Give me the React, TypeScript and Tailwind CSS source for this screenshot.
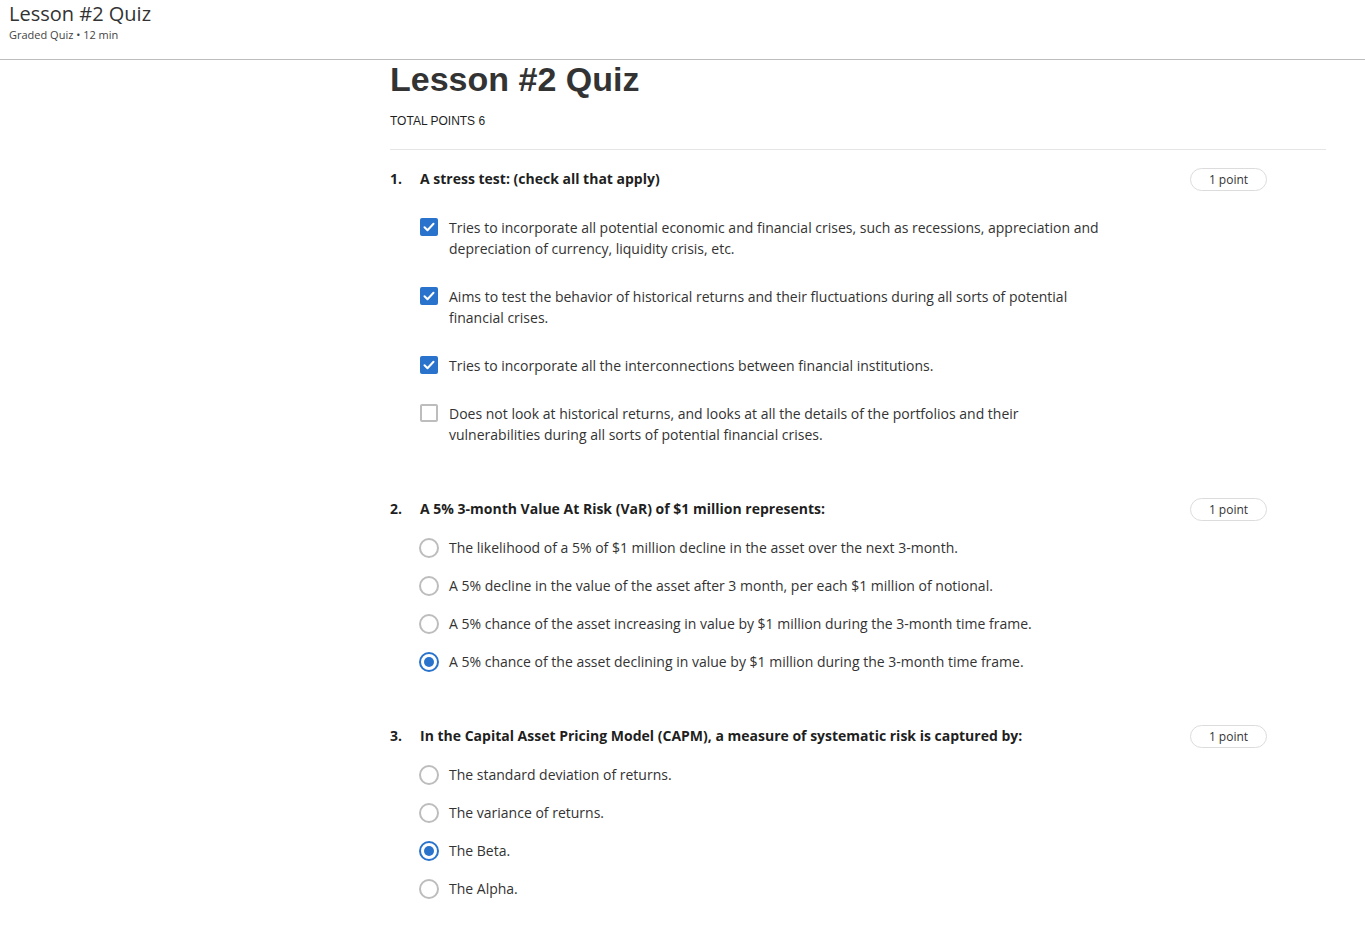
import React from "react";

type Question = {
  n: number;
  title: string;
  kind: "check" | "radio";
  options: { text: string; on: boolean }[];
};

const questions: Question[] = [
  {
    n: 1,
    title: "A stress test: (check all that apply)",
    kind: "check",
    options: [
      {
        text: "Tries to incorporate all potential economic and financial crises, such as recessions, appreciation and depreciation of currency, liquidity crisis, etc.",
        on: true,
      },
      {
        text: "Aims to test the behavior of historical returns and their fluctuations during all sorts of potential financial crises.",
        on: true,
      },
      { text: "Tries to incorporate all the interconnections between financial institutions.", on: true },
      {
        text: "Does not look at historical returns, and looks at all the details of the portfolios and their vulnerabilities during all sorts of potential financial crises.",
        on: false,
      },
    ],
  },
  {
    n: 2,
    title: "A 5% 3-month Value At Risk (VaR) of $1 million represents:",
    kind: "radio",
    options: [
      { text: "The likelihood of a 5% of $1 million decline in the asset over the next 3-month.", on: false },
      { text: "A 5% decline in the value of the asset after 3 month, per each $1 million of notional.", on: false },
      { text: "A 5% chance of the asset increasing in value by $1 million during the 3-month time frame.", on: false },
      { text: "A 5% chance of the asset declining in value by $1 million during the 3-month time frame.", on: true },
    ],
  },
  {
    n: 3,
    title: "In the Capital Asset Pricing Model (CAPM), a measure of systematic risk is captured by:",
    kind: "radio",
    options: [
      { text: "The standard deviation of returns.", on: false },
      { text: "The variance of returns.", on: false },
      { text: "The Beta.", on: true },
      { text: "The Alpha.", on: false },
    ],
  },
];

function Checkbox({ on }: { on: boolean }) {
  if (on) {
    return (
      <span className="mt-[1px] flex h-[18px] w-[18px] shrink-0 items-center justify-center rounded-[2px] bg-[#2a73cc]">
        <svg width="14" height="14" viewBox="0 0 14 14" fill="none">
          <path d="M2.5 7.2l3 3 6-6.4" stroke="#fff" strokeWidth="2" strokeLinecap="round" strokeLinejoin="round" />
        </svg>
      </span>
    );
  }
  return <span className="mt-[1px] h-[18px] w-[18px] shrink-0 rounded-[2px] border-2 border-[#bdbdbd] bg-white" />;
}

function Radio({ on }: { on: boolean }) {
  return (
    <span
      className={
        on
          ? "flex h-[20px] w-[20px] shrink-0 items-center justify-center rounded-full border-2 border-[#2a73cc]"
          : "h-[20px] w-[20px] shrink-0 rounded-full border-2 border-[#bdbdbd]"
      }
    >
      {on && <span className="h-[10px] w-[10px] rounded-full bg-[#2a73cc]" />}
    </span>
  );
}

function QuestionBlock({ q }: { q: Question }) {
  return (
    <div className="flex items-start">
      <div className="flex-1">
        <div className="flex h-[21px] items-center text-[14px] font-bold text-[#1f1f1f]">
          <span className="w-[30px]">{q.n}.</span>
          <span>{q.title}</span>
        </div>
        {q.kind === "check" ? (
          <div className="mt-[28px] flex flex-col gap-[27px] pl-[30px]">
            {q.options.map((o, i) => (
              <div key={i} className="flex items-start gap-[11px]">
                <Checkbox on={o.on} />
                <p className="max-w-[660px] text-[14px] leading-[21px] text-[#333]">{o.text}</p>
              </div>
            ))}
          </div>
        ) : (
          <div className="mt-[18px] flex flex-col gap-[17px] pl-[29px]">
            {q.options.map((o, i) => (
              <div key={i} className="flex items-center gap-[10px]">
                <Radio on={o.on} />
                <p className="text-[14px] leading-[21px] text-[#333]">{o.text}</p>
              </div>
            ))}
          </div>
        )}
      </div>
      <span className="mr-[59px] mt-[0px] flex h-[23px] w-[77px] items-center justify-center rounded-full border border-[#dcdcdc] text-[12px] text-[#333]">
        1 point
      </span>
    </div>
  );
}

export default function App() {
  return (
    <div className="min-h-screen bg-white font-['Open_Sans',sans-serif] text-[#333]">
      <header className="h-[60px] border-b border-[#bdbdbd] pl-[9px] pt-[1px]">
        <h1 className="text-[20px] leading-[25px] text-[#333]">Lesson #2 Quiz</h1>
        <p className="mt-[1px] text-[11px] leading-[15px] text-[#444]">Graded Quiz • 12 min</p>
      </header>
      <main className="ml-[390px] mr-[39px]">
        <h2 className="mt-[-1px] font-['Liberation_Sans',Arial,sans-serif] text-[34px] font-bold leading-[40px] text-[#333]">
          Lesson #2 Quiz
        </h2>
        <p className="mt-[15px] font-['Liberation_Sans',Arial,sans-serif] text-[12px] leading-[14px] text-[#1f1f1f]">
          TOTAL POINTS 6
        </p>
        <div className="mt-[21px] border-t border-[#e5e5e5]" />
        <div className="mt-[18px] flex flex-col gap-[53px] pb-[30px]">
          {questions.map((q) => (
            <QuestionBlock key={q.n} q={q} />
          ))}
        </div>
      </main>
    </div>
  );
}
